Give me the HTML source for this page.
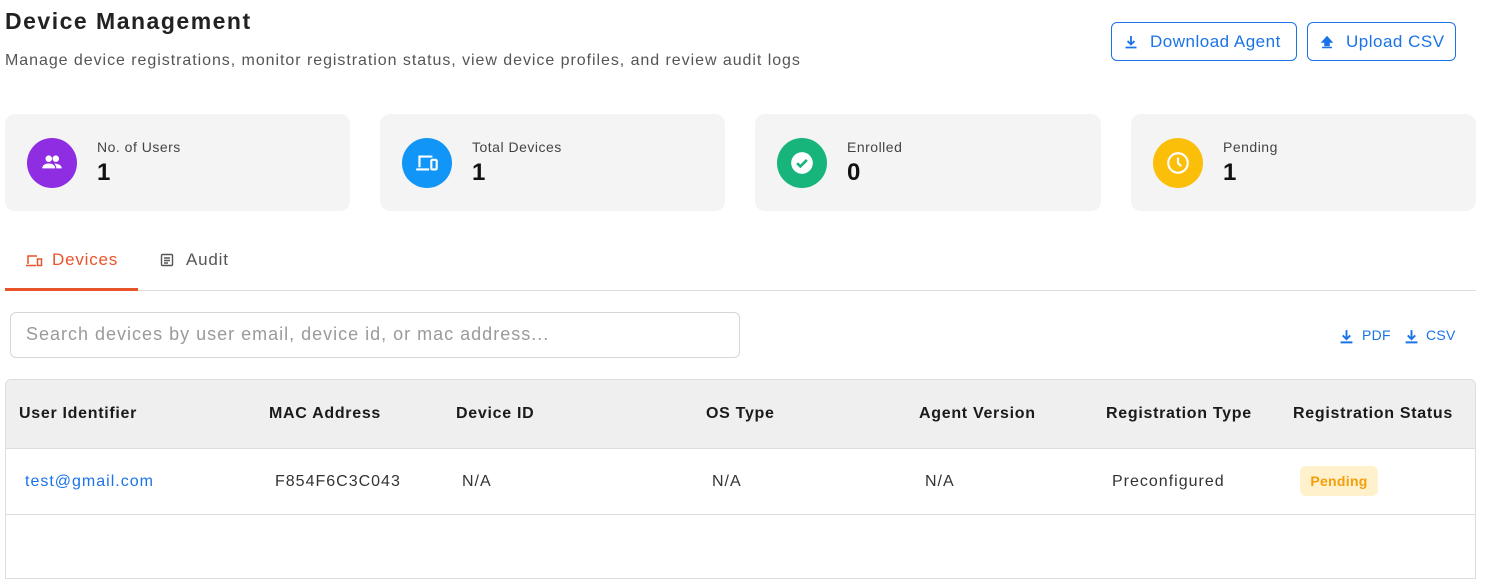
<!DOCTYPE html>
<html><head><meta charset="utf-8"><style>
*{margin:0;padding:0;box-sizing:border-box}
body{width:1507px;height:568px;overflow:hidden;background:#fff;font-family:"Liberation Sans",sans-serif;color:#1f1f1f;position:relative;letter-spacing:0.8px}
.a{position:absolute;white-space:nowrap}
.btn{position:absolute;top:22px;height:39px;border:1px solid #1a73e8;border-radius:6px;color:#1a73e8;font-size:17px;display:flex;align-items:center;gap:12px;padding-left:12px;letter-spacing:0.5px}
.card{position:absolute;top:114px;width:345px;height:97px;background:#f4f4f4;border-radius:10px}
.circ{position:absolute;left:22px;top:24px;width:50px;height:50px;border-radius:50%;display:flex;align-items:center;justify-content:center}
.lab{position:absolute;left:92px;top:25px;font-size:14px;color:#444;letter-spacing:0.5px}
.val{position:absolute;left:92px;top:45px;font-size:24px;font-weight:bold;color:#111}
.th{position:absolute;top:405px;font-size:16px;font-weight:bold;color:#1a1a1a;letter-spacing:0.7px}
.td{position:absolute;top:473px;font-size:16px;color:#333;letter-spacing:1px}
</style></head><body>
<div class="a" style="left:5px;top:8px;font-size:23px;font-weight:bold;color:#222;letter-spacing:1.5px">Device Management</div>
<div class="a" style="left:5px;top:52px;font-size:16px;color:#555;letter-spacing:0.95px">Manage device registrations, monitor registration status, view device profiles, and review audit logs</div>
<div class="btn" style="left:1111px;width:186px"><svg width="14" height="14" viewBox="0 0 14 14"><path d="M7 1v8M3.5 6l3.5 3.5L10.5 6M1.5 12.5h11" stroke="#1a73e8" stroke-width="1.8" fill="none"/></svg>Download Agent</div>
<div class="btn" style="left:1307px;width:149px"><svg width="14" height="14" viewBox="0 0 14 14"><path d="M7 2L2.5 7H5v3.5h4V7h2.5z M2 12.5h10" stroke="#1a73e8" stroke-width="1.6" fill="#1a73e8"/></svg>Upload CSV</div>

<div class="card" style="left:5px"><div class="circ" style="background:#8e2de2"><svg width="26" height="26" viewBox="0 0 24 24" fill="#fff"><circle cx="9" cy="8" r="3"/><circle cx="15.5" cy="8" r="3"/><path d="M3 17c0-3 3-4.5 6-4.5s6 1.5 6 4.5z M14 12.6c3 0 7 1 7 4.4h-5c0-2-1-3.5-2-4.4z"/></svg></div><div class="lab">No. of Users</div><div class="val">1</div></div>
<div class="card" style="left:380px"><div class="circ" style="background:#1196f8"><svg width="28" height="28" viewBox="0 0 26 26" fill="none" stroke="#fff" stroke-width="2"><path d="M6 17V7h12M3 19h12"/><rect x="17" y="10" width="5" height="9" rx="1"/></svg></div><div class="lab">Total Devices</div><div class="val">1</div></div>
<div class="card" style="left:755px;width:346px"><div class="circ" style="background:#17b47c"><svg width="26" height="26" viewBox="0 0 24 24"><circle cx="12" cy="12" r="10" fill="#fff"/><path d="M7.5 12.2l3 3 6-6" stroke="#17b47c" stroke-width="2.4" fill="none"/></svg></div><div class="lab">Enrolled</div><div class="val">0</div></div>
<div class="card" style="left:1131px"><div class="circ" style="background:#fbbf0a"><svg width="26" height="26" viewBox="0 0 24 24" fill="none" stroke="#fff" stroke-width="2"><circle cx="12" cy="12" r="9"/><path d="M12 7v5l3 3"/></svg></div><div class="lab">Pending</div><div class="val">1</div></div>

<svg class="a" style="left:25px;top:253px" width="18" height="14" viewBox="0 0 18 14" fill="none" stroke="#e8542a" stroke-width="1.5"><path d="M3 11V3h9M1 12.5h10"/><rect x="12.5" y="6" width="4" height="6.5"/></svg>
<div class="a" style="left:52px;top:250px;font-size:17px;color:#e8542a">Devices</div>
<svg class="a" style="left:160px;top:253px" width="14" height="14" viewBox="0 0 14 14" fill="none" stroke="#555" stroke-width="1.4"><rect x="1.5" y="1.5" width="11" height="11" rx="1"/><path d="M4 5h6M4 7.5h6M4 10h4"/></svg>
<div class="a" style="left:186px;top:250px;font-size:17px;color:#555">Audit</div>
<div class="a" style="left:5px;top:290px;width:1471px;height:1px;background:#ddd"></div>
<div class="a" style="left:5px;top:288px;width:133px;height:3px;background:#e8542a"></div>

<div class="a" style="left:10px;top:312px;width:730px;height:46px;border:1px solid #d6d6d6;border-radius:6px"></div>
<div class="a" style="left:26px;top:324px;font-size:18px;color:#9a9a9a;letter-spacing:1px">Search devices by user email, device id, or mac address...</div>
<svg class="a" style="left:1339px;top:329px" width="15" height="15" viewBox="0 0 14 14"><path d="M7 1v8M3.5 6l3.5 3.5L10.5 6M1.5 12.5h11" stroke="#1a73e8" stroke-width="1.8" fill="none"/></svg>
<div class="a" style="left:1362px;top:327px;font-size:14px;color:#1a73e8;letter-spacing:0.3px">PDF</div>
<svg class="a" style="left:1404px;top:329px" width="15" height="15" viewBox="0 0 14 14"><path d="M7 1v8M3.5 6l3.5 3.5L10.5 6M1.5 12.5h11" stroke="#1a73e8" stroke-width="1.8" fill="none"/></svg>
<div class="a" style="left:1426px;top:327px;font-size:14px;color:#1a73e8;letter-spacing:0.3px">CSV</div>

<div class="a" style="left:5px;top:379px;width:1471px;height:200px;border:1px solid #ddd;border-radius:6px 6px 0 0"></div>
<div class="a" style="left:6px;top:380px;width:1469px;height:69px;background:#efefef;border-bottom:1px solid #ddd;border-radius:5px 5px 0 0"></div>
<div class="a" style="left:6px;top:514px;width:1469px;height:1px;background:#ddd"></div>
<div class="th" style="left:19px">User Identifier</div>
<div class="th" style="left:269px">MAC Address</div>
<div class="th" style="left:456px">Device ID</div>
<div class="th" style="left:706px">OS Type</div>
<div class="th" style="left:919px">Agent Version</div>
<div class="th" style="left:1106px">Registration Type</div>
<div class="th" style="left:1293px">Registration Status</div>
<div class="td" style="left:25px;color:#1a73e8">test@gmail.com</div>
<div class="td" style="left:275px">F854F6C3C043</div>
<div class="td" style="left:462px">N/A</div>
<div class="td" style="left:712px">N/A</div>
<div class="td" style="left:925px">N/A</div>
<div class="td" style="left:1112px">Preconfigured</div>
<div class="a" style="left:1300px;top:466px;width:78px;height:30px;background:#fff1cc;border-radius:6px;color:#f59e0b;font-size:14px;font-weight:bold;text-align:center;line-height:30px;letter-spacing:0.3px">Pending</div>
</body></html>
